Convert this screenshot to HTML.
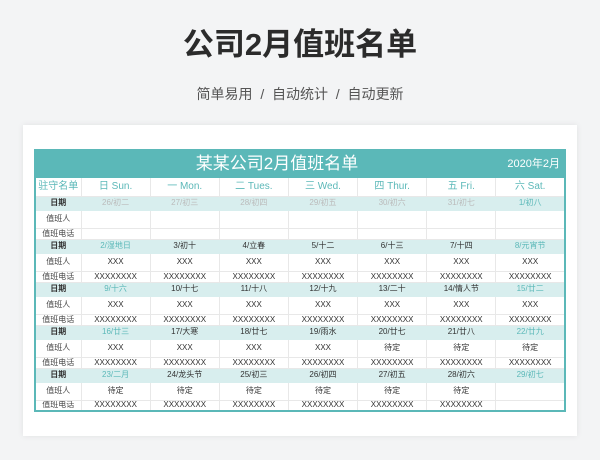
<!DOCTYPE html>
<html><head><meta charset="utf-8"><style>
*{margin:0;padding:0;box-sizing:border-box}
body{width:600px;height:460px;background:#f3f4f5;font-family:"Liberation Sans","Noto Sans CJK SC",sans-serif;position:relative;overflow:hidden}
h1{position:absolute;top:24px;left:0;width:600px;text-align:center;font-size:31px;font-weight:bold;color:#2b2b2b;line-height:42px;letter-spacing:0px}
.sub{position:absolute;top:84px;left:0;width:600px;text-align:center;font-size:14px;color:#555;line-height:20px}
.card{position:absolute;left:23px;top:125px;width:554px;height:311px;background:#fff;box-shadow:0 0 6px rgba(0,0,0,.08)}
table{position:absolute;left:34px;top:149px;width:532px;border-collapse:collapse;table-layout:fixed;border:2px solid #5bb8b8}
td{border:1px solid #e8e8e8;text-align:center;font-size:8px;color:#333;padding:0;line-height:1;overflow:hidden;white-space:nowrap}
tr.t td{background:#5bb8b8;color:#fff;height:27px;font-size:17px;border-color:#5bb8b8}
tr.w td{height:19px;font-size:10px;color:#5bb8b8}
tr.d td{height:14px;background:#d8eeee;border-color:#d8eeee}
tr.p td{height:18px}
tr.ph td{height:11px}
td.l{color:#444;font-size:8px}
tr.d td.l{font-weight:bold;color:#333}
.g{color:#bbb}.c{color:#5bb8b8}
</style></head><body>
<h1>公司2月值班名单</h1>
<div class="sub">简单易用 &nbsp;/&nbsp; 自动统计 &nbsp;/&nbsp; 自动更新</div>
<div class="card"></div>
<table>
<colgroup><col style="width:46px"><col><col><col><col><col><col><col></colgroup>
<tr class="t"><td colspan="8" style="position:relative;padding-right:46px">某某公司2月值班名单<span style="position:absolute;right:4px;top:8px;font-size:11px">2020年2月</span></td></tr>
<tr class="w"><td>驻守名单</td><td>日 Sun.</td><td>一 Mon.</td><td>二 Tues.</td><td>三 Wed.</td><td>四 Thur.</td><td>五 Fri.</td><td>六 Sat.</td></tr>
<tr class="d"><td class="l">日期</td><td class="g">26/初二</td><td class="g">27/初三</td><td class="g">28/初四</td><td class="g">29/初五</td><td class="g">30/初六</td><td class="g">31/初七</td><td class="c">1/初八</td></tr>
<tr class="p"><td class="l">值班人</td><td></td><td></td><td></td><td></td><td></td><td></td><td></td></tr>
<tr class="ph"><td class="l">值班电话</td><td></td><td></td><td></td><td></td><td></td><td></td><td></td></tr>
<tr class="d"><td class="l">日期</td><td class="c">2/湿地日</td><td>3/初十</td><td>4/立春</td><td>5/十二</td><td>6/十三</td><td>7/十四</td><td class="c">8/元宵节</td></tr>
<tr class="p"><td class="l">值班人</td><td>XXX</td><td>XXX</td><td>XXX</td><td>XXX</td><td>XXX</td><td>XXX</td><td>XXX</td></tr>
<tr class="ph"><td class="l">值班电话</td><td>XXXXXXXX</td><td>XXXXXXXX</td><td>XXXXXXXX</td><td>XXXXXXXX</td><td>XXXXXXXX</td><td>XXXXXXXX</td><td>XXXXXXXX</td></tr>
<tr class="d"><td class="l">日期</td><td class="c">9/十六</td><td>10/十七</td><td>11/十八</td><td>12/十九</td><td>13/二十</td><td>14/情人节</td><td class="c">15/廿二</td></tr>
<tr class="p"><td class="l">值班人</td><td>XXX</td><td>XXX</td><td>XXX</td><td>XXX</td><td>XXX</td><td>XXX</td><td>XXX</td></tr>
<tr class="ph"><td class="l">值班电话</td><td>XXXXXXXX</td><td>XXXXXXXX</td><td>XXXXXXXX</td><td>XXXXXXXX</td><td>XXXXXXXX</td><td>XXXXXXXX</td><td>XXXXXXXX</td></tr>
<tr class="d"><td class="l">日期</td><td class="c">16/廿三</td><td>17/大寒</td><td>18/廿七</td><td>19/雨水</td><td>20/廿七</td><td>21/廿八</td><td class="c">22/廿九</td></tr>
<tr class="p"><td class="l">值班人</td><td>XXX</td><td>XXX</td><td>XXX</td><td>XXX</td><td>待定</td><td>待定</td><td>待定</td></tr>
<tr class="ph"><td class="l">值班电话</td><td>XXXXXXXX</td><td>XXXXXXXX</td><td>XXXXXXXX</td><td>XXXXXXXX</td><td>XXXXXXXX</td><td>XXXXXXXX</td><td>XXXXXXXX</td></tr>
<tr class="d"><td class="l">日期</td><td class="c">23/二月</td><td>24/龙头节</td><td>25/初三</td><td>26/初四</td><td>27/初五</td><td>28/初六</td><td class="c">29/初七</td></tr>
<tr class="p"><td class="l">值班人</td><td>待定</td><td>待定</td><td>待定</td><td>待定</td><td>待定</td><td>待定</td><td></td></tr>
<tr class="ph"><td class="l">值班电话</td><td>XXXXXXXX</td><td>XXXXXXXX</td><td>XXXXXXXX</td><td>XXXXXXXX</td><td>XXXXXXXX</td><td>XXXXXXXX</td><td></td></tr>
</table>
</body></html>
